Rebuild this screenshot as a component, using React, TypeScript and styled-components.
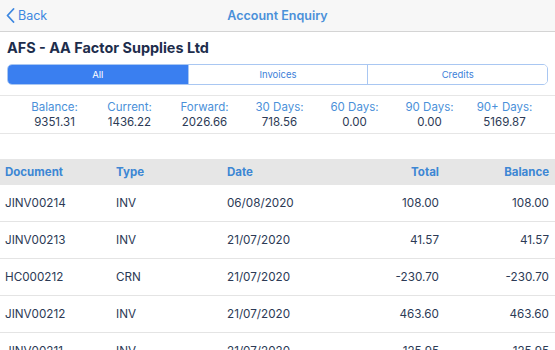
import React from "react";
import styled, { createGlobalStyle } from "styled-components";

const GlobalStyle = createGlobalStyle`
  html, body {
    margin: 0;
    padding: 0;
    background: #ffffff;
    font-family: Inter, "Noto Sans", sans-serif;
    overflow: hidden;
  }
`;

const summary = [
  { label: "Balance:", value: "9351.31" },
  { label: "Current:", value: "1436.22" },
  { label: "Forward:", value: "2026.66" },
  { label: "30 Days:", value: "718.56" },
  { label: "60 Days:", value: "0.00" },
  { label: "90 Days:", value: "0.00" },
  { label: "90+ Days:", value: "5169.87" },
];

const rows = [
  { doc: "JINV00214", type: "INV", date: "06/08/2020", total: "108.00", balance: "108.00" },
  { doc: "JINV00213", type: "INV", date: "21/07/2020", total: "41.57", balance: "41.57" },
  { doc: "HC000212", type: "CRN", date: "21/07/2020", total: "-230.70", balance: "-230.70" },
  { doc: "JINV00212", type: "INV", date: "21/07/2020", total: "463.60", balance: "463.60" },
  { doc: "JINV00211", type: "INV", date: "21/07/2020", total: "125.95", balance: "125.95" },
];

const tabs = ["All", "Invoices", "Credits"];

const App = () => {
  return (
    <>
      <GlobalStyle />
      <Screen>
        <NavBar>
          <BackButton>
            <svg width="9" height="15" viewBox="0 0 9 15">
              <path
                d="M7.5 1 L1.5 7.5 L7.5 14"
                fill="none"
                stroke="#3d87e0"
                strokeWidth="1.8"
                strokeLinecap="round"
                strokeLinejoin="round"
              />
            </svg>
            <span>Back</span>
          </BackButton>
          <NavTitle>Account Enquiry</NavTitle>
        </NavBar>

        <Header>
          <CompanyName>AFS - AA Factor Supplies Ltd</CompanyName>
          <Segmented>
            {tabs.map((t, i) => (
              <Segment key={t} $active={i === 0}>
                {t}
              </Segment>
            ))}
          </Segmented>
        </Header>

        <Summary>
          {summary.map((s) => (
            <SummaryCell key={s.label}>
              <SummaryLabel>{s.label}</SummaryLabel>
              <SummaryValue>{s.value}</SummaryValue>
            </SummaryCell>
          ))}
        </Summary>

        <Table>
          <HeadRow>
            <HeadCell>Document</HeadCell>
            <HeadCell>Type</HeadCell>
            <HeadCell>Date</HeadCell>
            <HeadCell $right>Total</HeadCell>
            <HeadCell $right>Balance</HeadCell>
          </HeadRow>
          {rows.map((r) => (
            <Row key={r.doc}>
              <Cell>{r.doc}</Cell>
              <Cell>{r.type}</Cell>
              <Cell>{r.date}</Cell>
              <Cell $right>{r.total}</Cell>
              <Cell $right>{r.balance}</Cell>
            </Row>
          ))}
        </Table>
      </Screen>
    </>
  );
};

export default App;

const Screen = styled.div`
  width: 555px;
  height: 350px;
  overflow: hidden;
  background: #ffffff;
`;

const NavBar = styled.div`
  height: 31px;
  background: #f7f7f7;
  border-bottom: 1px solid #d4d4d4;
  display: flex;
  align-items: center;
  justify-content: center;
  position: relative;
`;

const BackButton = styled.div`
  position: absolute;
  left: 6px;
  top: 0;
  bottom: 0;
  display: flex;
  align-items: center;
  gap: 3px;
  color: #3d87e0;
  font-size: 12.5px;

  span {
    margin-top: -1px;
  }
`;

const NavTitle = styled.div`
  color: #4a90d9;
  font-size: 12.5px;
  font-weight: 600;
`;

const Header = styled.div`
  padding: 7px 7px 10px 7px;
  border-bottom: 1px solid #e6e6e6;
`;

const CompanyName = styled.div`
  color: #1d2d4c;
  font-size: 14.4px;
  font-weight: 700;
  line-height: 18px;
  margin-bottom: 7px;
`;

const Segmented = styled.div`
  display: grid;
  grid-template-columns: repeat(3, 1fr);
  height: 21px;
  border: 1px solid #a9c7f2;
  border-radius: 5px;
  overflow: hidden;
  box-sizing: border-box;
`;

const Segment = styled.div<{ $active?: boolean }>`
  display: flex;
  align-items: center;
  justify-content: center;
  font-size: 9.5px;
  color: ${(p) => (p.$active ? "#ffffff" : "#3d7fd9")};
  background: ${(p) => (p.$active ? "#3a7ff0" : "#ffffff")};
  & + & {
    border-left: 1px solid #a9c7f2;
  }
`;

const Summary = styled.div`
  display: grid;
  grid-template-columns: repeat(7, 75px);
  padding: 4px 0 3px 17px;
  border-bottom: 1px solid #e6e6e6;
  margin-bottom: 25px;
`;

const SummaryCell = styled.div`
  display: flex;
  flex-direction: column;
  align-items: center;
  font-size: 11.5px;
  line-height: 15px;
`;

const SummaryLabel = styled.div`
  color: #4a90d9;
`;

const SummaryValue = styled.div`
  color: #2c3a55;
`;

const Table = styled.div`
  display: flex;
  flex-direction: column;
`;

const columns = "111px 111px 150px 62px 1fr";

const HeadRow = styled.div`
  display: grid;
  grid-template-columns: ${columns};
  height: 26px;
  align-items: center;
  background: #e6e6e6;
  padding: 0 6px 0 5px;
`;

const HeadCell = styled.div<{ $right?: boolean }>`
  color: #3d87d4;
  font-size: 11.5px;
  font-weight: 700;
  text-align: ${(p) => (p.$right ? "right" : "left")};
`;

const Row = styled.div`
  display: grid;
  grid-template-columns: ${columns};
  height: 36px;
  align-items: center;
  padding: 0 6px 0 5px;
  border-bottom: 1px solid #e4e4e4;
  &:first-of-type {
    height: 37px;
  }
`;

const Cell = styled.div<{ $right?: boolean }>`
  color: #2c3a55;
  font-size: 11.7px;
  text-align: ${(p) => (p.$right ? "right" : "left")};
`;
